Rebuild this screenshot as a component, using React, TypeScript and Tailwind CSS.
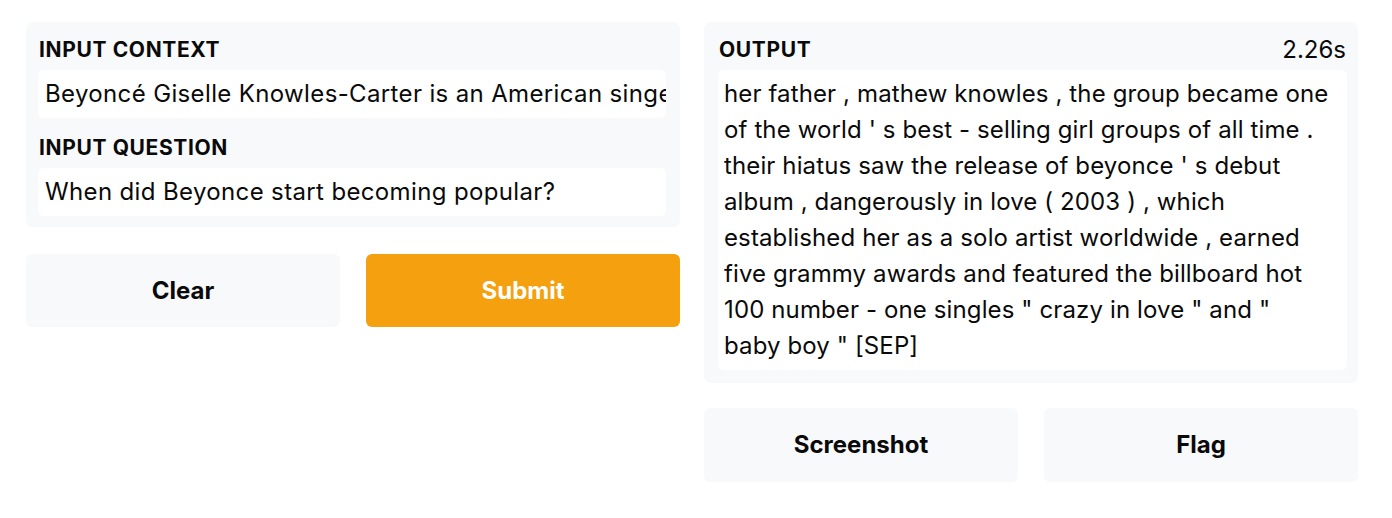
const outputLines = [
  "her father , mathew knowles , the group became one",
  "of the world ' s best - selling girl groups of all time .",
  "their hiatus saw the release of beyonce ' s debut",
  "album , dangerously in love ( 2003 ) , which",
  "established her as a solo artist worldwide , earned",
  "five grammy awards and featured the billboard hot",
  "100 number - one singles \" crazy in love \" and \"",
  "baby boy \" [SEP]",
];

const font = "font-['Inter','Noto_Sans',sans-serif]";

function Label({ children }: { children: React.ReactNode }) {
  return (
    <p className="pl-[1px] text-[21px] font-bold leading-[28px] tracking-[0.03em] text-neutral-950">
      {children}
    </p>
  );
}

function Field({ value }: { value: string }) {
  return (
    <div className="mt-[6px] h-[48px] overflow-hidden whitespace-nowrap rounded-[6px] bg-white px-[7px] py-[6px] text-[24px] leading-[36px] tracking-[0.015em] text-neutral-950">
      {value}
    </div>
  );
}

function Button({ label, primary }: { label: string; primary?: boolean }) {
  return (
    <button
      className={
        primary
          ? "min-w-0 flex-1 rounded-[6px] bg-[#f4a00f] text-[24px] font-bold text-white"
          : "min-w-0 flex-1 rounded-[6px] bg-[#f8f9fb] text-[24px] font-bold text-neutral-950"
      }
    >
      {label}
    </button>
  );
}

export default function App() {
  return (
    <main className={`min-h-screen bg-white ${font}`}>
      <div className="grid grid-cols-2 items-start gap-6 pl-[26px] pr-[34px] pt-[22px]">
        <section className="flex min-w-0 flex-col">
          <div className="rounded-[7px] bg-[#f8f9fb] pb-[11px] pl-3 pr-[14px] pt-[14px]">
            <Label>INPUT CONTEXT</Label>
            <Field value="Beyoncé Giselle Knowles-Carter is an American singer, songwriter, record producer and actress." />
            <div className="mt-[16px]">
              <Label>INPUT QUESTION</Label>
            </div>
            <Field value="When did Beyonce start becoming popular?" />
          </div>
          <div className="mt-[27px] flex h-[73px] gap-[26px]">
            <Button label="Clear" />
            <Button label="Submit" primary />
          </div>
        </section>

        <section className="flex min-w-0 flex-col">
          <div className="rounded-[7px] bg-[#f8f9fb] pb-[13px] pl-[14px] pr-[11px] pt-[14px]">
            <div className="flex items-center justify-between">
              <Label>OUTPUT</Label>
              <span className="pr-[1px] text-[24px] leading-[28px] text-neutral-950">2.26s</span>
            </div>
            <div className="mt-[6px] overflow-hidden rounded-[6px] bg-white px-[6px] py-[6px] text-[24px] leading-[36px] tracking-[0.005em] text-neutral-950">
              {outputLines.map((line) => (
                <span key={line} className="block whitespace-nowrap">
                  {line}
                </span>
              ))}
            </div>
          </div>
          <div className="mt-[25px] flex h-[74px] gap-[26px]">
            <Button label="Screenshot" />
            <Button label="Flag" />
          </div>
        </section>
      </div>
    </main>
  );
}
